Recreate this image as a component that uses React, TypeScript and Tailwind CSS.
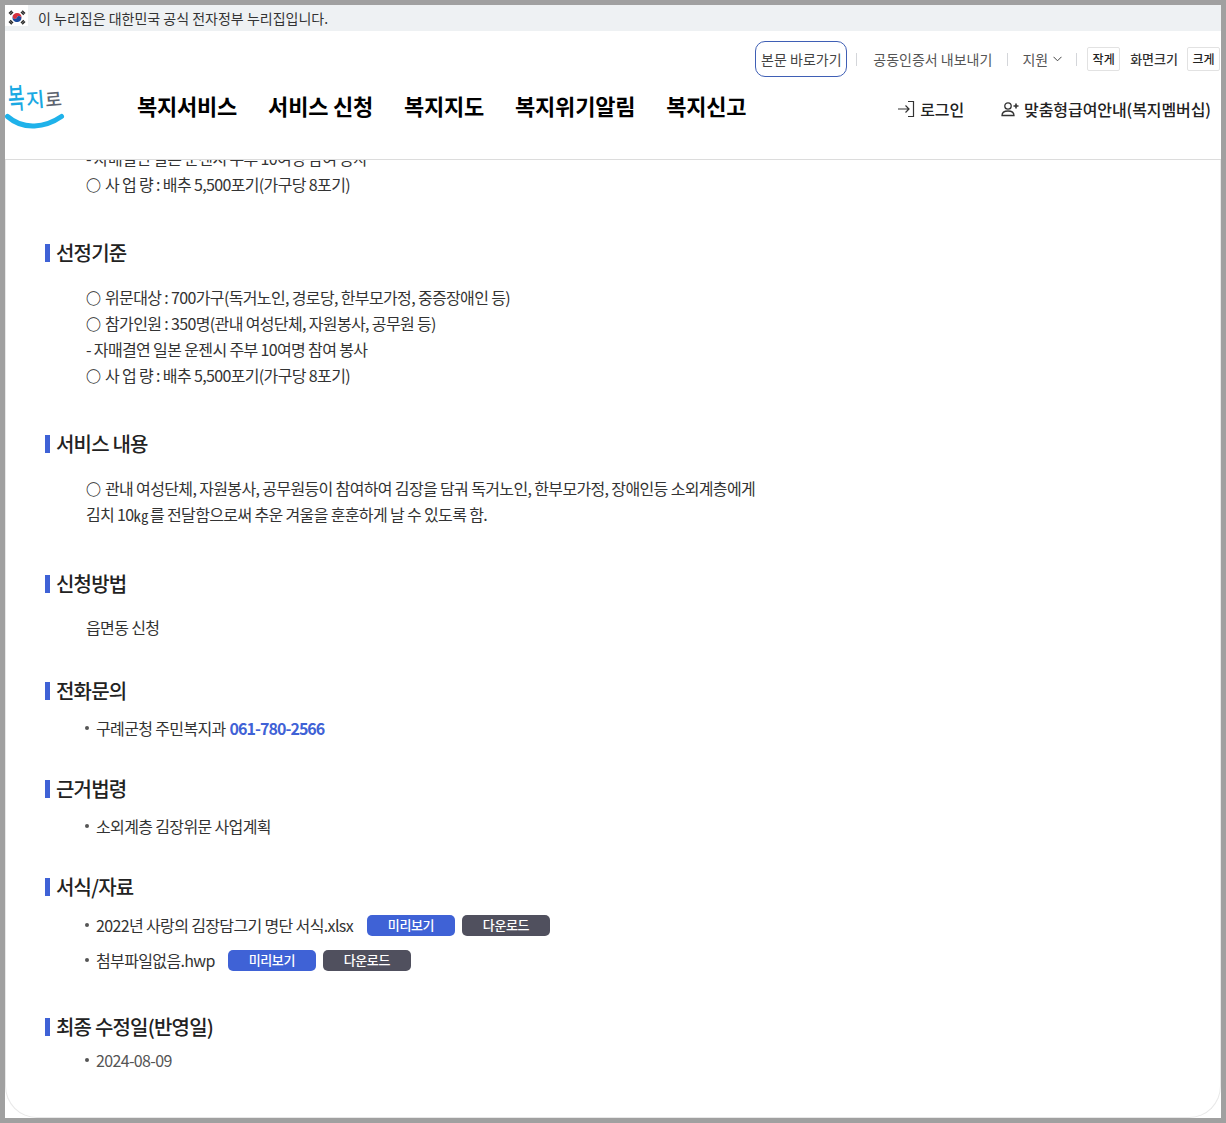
import React from 'react';

const Flag = () => (
  <svg width="18" height="15" viewBox="0 0 18 15" className="block">
    <path d="M4.800 5.600a4.600 4.600 0 0 1 8.400 3.800 2.300 2.300 0 0 0-4.200-1.900 2.300 2.300 0 0 1-4.200-1.900z" fill="#d5303e" />
    <path d="M4.800 5.600a2.300 2.300 0 0 0 4.200 1.900 2.300 2.300 0 0 1 4.200 1.900 4.600 4.600 0 0 1-8.400-3.800z" fill="#1b4a9c" />
    <g stroke="#2a2a2a" strokeWidth="1.500">
      <path d="M1 3.500L3.800.800M2.200 4.700L5 2" />
      <path d="M13 2l2.800 2.700M14.200.800L17 3.500" />
      <path d="M1 11.500l2.800 2.700M2.200 10.300L5 13" />
      <path d="M13 13l2.800-2.700M14.200 14.200l2.800-2.700" />
    </g>
  </svg>
);

const Logo = () => (
  <div className="relative w-[62px] h-[54px] shrink-0">
    <span className="absolute left-[2px] top-[9px] text-[20px] leading-[24px] font-medium text-[#1aa9e3] -rotate-[4deg] scale-y-[1.450] scale-x-[0.900]">복</span>
    <span className="absolute left-[21px] top-[11px] text-[20px] leading-[24px] font-medium text-[#1aa9e3] -rotate-[5deg]">지</span>
    <span className="absolute left-[40px] top-[10px] text-[18px] leading-[24px] font-medium text-[#5d6470] -rotate-[5deg]">로</span>
    <svg className="absolute left-0 top-[37px]" width="60" height="20" viewBox="0 0 60 20" fill="none">
      <path d="M2.500 3.500c8 7 16 10 27 9.500 11-.5 19-4 27-9.500" stroke="#1fb2ea" strokeWidth="5" strokeLinecap="round" />
    </svg>
  </div>
);

const LoginIcon = () => (
  <svg width="18" height="18" viewBox="0 0 18 18" fill="none" stroke="#333" strokeWidth="1.200">
    <path d="M1 9h11M8.500 5.500L12 9l-3.500 3.500" />
    <path d="M11 1.500h5.500v15H11" />
  </svg>
);

const UserPlusIcon = () => (
  <svg width="18" height="16" viewBox="0 0 18 16" fill="none" stroke="#333" strokeWidth="1.300">
    <circle cx="7" cy="5" r="3.200" />
    <path d="M1 14.500c0-3 2.500-4.500 6-4.500s6 1.500 6 4.500z" />
    <path d="M12.500 5h5M15 2.500v5" strokeWidth="1.600" />
  </svg>
);

const Divider = () => <span className="block w-px h-[13px] bg-[#d4d6da]" />;

const SectionTitle = ({ children, className }: { children: React.ReactNode; className: string }) => (
  <h3 className={`flex items-center gap-[6px] text-[20px] leading-[26px] font-medium text-[#222] tracking-[-0.04em] ${className}`}>
    <span className="w-[5px] h-[18px] bg-[#3f62d6]" />
    {children}
  </h3>
);

const Bullet = ({ children, className = '' }: { children: React.ReactNode; className?: string }) => (
  <div className={`flex items-center pl-[40px] text-[16px] leading-[26px] tracking-[-0.04em] ${className}`}>
    <span className="w-[4px] h-[4px] rounded-full bg-[#555] mr-[7px]" />
    {children}
  </div>
);

const FileBtns = () => (
  <div className="flex gap-[7px]">
    <button className="w-[88px] h-[21px] rounded-[5px] bg-[#3f62d6] text-white text-[13px] leading-[20px] font-medium tracking-[-0.03em]">미리보기</button>
    <button className="w-[88px] h-[21px] rounded-[5px] bg-[#50505e] text-white text-[13px] leading-[20px] font-medium tracking-[-0.03em]">다운로드</button>
  </div>
);

const TextLine = ({ children }: { children: React.ReactNode }) => <p className="h-[26px]">{children}</p>;

const Circle = () => <span className="inline-block w-[19px] text-[15px] font-bold text-[#222]">○</span>;

export default function App() {
  return (
    <div className="w-[1226px] h-[1123px] bg-[#a0a0a0] p-[5px] overflow-hidden font-['Noto_Sans_CJK_KR','Noto_Sans',sans-serif]">
      <div className="h-full flex flex-col bg-white">
        {/* 누리집 배너 */}
        <div className="h-[26px] shrink-0 flex items-center bg-[#eef1f3] text-[14px] text-[#333]">
          <div className="w-[23px] h-[21px] bg-white flex justify-center pt-[5px] self-start shrink-0">
            <Flag />
          </div>
          <span className="ml-[10px]">이 누리집은 대한민국 공식 전자정부 누리집입니다.</span>
        </div>

        {/* 헤더 */}
        <header className="h-[129px] shrink-0 flex flex-col border-b border-[#dcdcdc] bg-white">
          <div className="flex items-center justify-end h-[36px] mt-[10px] text-[14px] text-[#555] pr-px">
            <a className="w-[92px] h-[36px] flex items-center justify-center rounded-[10px] border border-[#3f5fb5] text-[#444]">본문 바로가기</a>
            <span className="ml-[9px]"><Divider /></span>
            <a className="ml-[16px]">공동인증서 내보내기</a>
            <span className="ml-[15px]"><Divider /></span>
            <span className="ml-[14px] flex items-center gap-[5px]">지원
              <svg width="9" height="6" viewBox="0 0 9 6" fill="none" stroke="#444"><path d="M.5.800l4 4 4-4" /></svg>
            </span>
            <span className="ml-[14px]"><Divider /></span>
            <button className="ml-[10px] w-[33px] h-[24px] border border-[#e2e2e2] rounded-[2px] text-[12px] font-medium text-[#222]">작게</button>
            <span className="ml-[10px] text-[13px] font-medium text-[#333]">화면크기</span>
            <button className="ml-[9px] w-[33px] h-[24px] border border-[#e2e2e2] rounded-[2px] text-[12px] font-medium text-[#222]">크게</button>
          </div>
          <div className="flex flex-1 relative">
            <div className="flex items-start -mt-[1px]">
              <Logo />
            </div>
            <nav className="flex gap-[31px] ml-[70px] mt-[12px] text-[22px] leading-[32px] font-bold text-black tracking-[-0.01em] h-[32px]">
              <a>복지서비스</a>
              <a>서비스 신청</a>
              <a>복지지도</a>
              <a>복지위기알림</a>
              <a>복지신고</a>
            </nav>
            <div className="ml-auto flex items-start mt-[19px] pr-[10px] text-[16px] leading-[26px] font-medium text-[#222] tracking-[-0.005em]">
              <a className="flex items-center gap-[5px]"><LoginIcon />로그인</a>
              <a className="flex items-center gap-[5px] ml-[37px]"><UserPlusIcon />맞춤형급여안내(복지멤버십)</a>
            </div>
          </div>
        </header>

        {/* 본문 */}
        <main className="flex-1 overflow-hidden rounded-b-[32px] border-b border-x border-[#e8e8e8]">
          <div className="-mt-[15px] pl-[39px]">
            <div className="pl-[41px] text-[16px] leading-[26px] text-[#333] tracking-[-0.04em]">
              <TextLine>- 자매결연 일본 운젠시 주부 10여명 참여 봉사</TextLine>
              <TextLine><Circle />사 업 량 : 배추 5,500포기(가구당 8포기)</TextLine>
            </div>

            <SectionTitle className="mt-[43px]">선정기준</SectionTitle>
            <div className="pl-[41px] mt-[18px] text-[16px] leading-[26px] text-[#333] tracking-[-0.04em]">
              <TextLine><Circle />위문대상 : 700가구(독거노인, 경로당, 한부모가정, 중증장애인 등)</TextLine>
              <TextLine><Circle />참가인원 : 350명(관내 여성단체, 자원봉사, 공무원 등)</TextLine>
              <TextLine>- 자매결연 일본 운젠시 주부 10여명 참여 봉사</TextLine>
              <TextLine><Circle />사 업 량 : 배추 5,500포기(가구당 8포기)</TextLine>
            </div>

            <SectionTitle className="mt-[43px]">서비스 내용</SectionTitle>
            <div className="pl-[41px] mt-[18px] text-[16px] leading-[26px] text-[#333] tracking-[-0.04em]">
              <TextLine><Circle />관내 여성단체, 자원봉사, 공무원등이 참여하여 김장을 담궈 독거노인, 한부모가정, 장애인등 소외계층에게</TextLine>
              <TextLine>김치 10<span className="text-[15px] mr-[2px]">㎏</span>를 전달함으로써 추운 겨울을 훈훈하게 날 수 있도록 함.</TextLine>
            </div>

            <SectionTitle className="mt-[44px]">신청방법</SectionTitle>
            <div className="pl-[41px] mt-[17px] text-[16px] leading-[26px] text-[#333] tracking-[-0.04em]">
              <TextLine>읍면동 신청</TextLine>
            </div>

            <SectionTitle className="mt-[38px]">전화문의</SectionTitle>
            <Bullet className="mt-[11px] text-[#333]">구례군청 주민복지과&nbsp;<span className="ml-px font-bold text-[#3f62d6] tracking-[-0.06em]">061-780-2566</span></Bullet>

            <SectionTitle className="mt-[35px]">근거법령</SectionTitle>
            <Bullet className="mt-[11px] text-[#333]">소외계층 김장위문 사업계획</Bullet>

            <SectionTitle className="mt-[35px]">서식/자료</SectionTitle>
            <Bullet className="mt-[12px] text-[#333]"><span className="mr-[14px]">2022년 사랑의 김장담그기 명단 서식.xlsx</span><FileBtns /></Bullet>
            <Bullet className="mt-[9px] text-[#333]"><span className="mr-[13px]">첨부파일없음.hwp</span><FileBtns /></Bullet>

            <SectionTitle className="mt-[41px]">최종 수정일(반영일)</SectionTitle>
            <Bullet className="mt-[7px] text-[#555]">2024-08-09</Bullet>
          </div>
        </main>
      </div>
    </div>
  );
}
